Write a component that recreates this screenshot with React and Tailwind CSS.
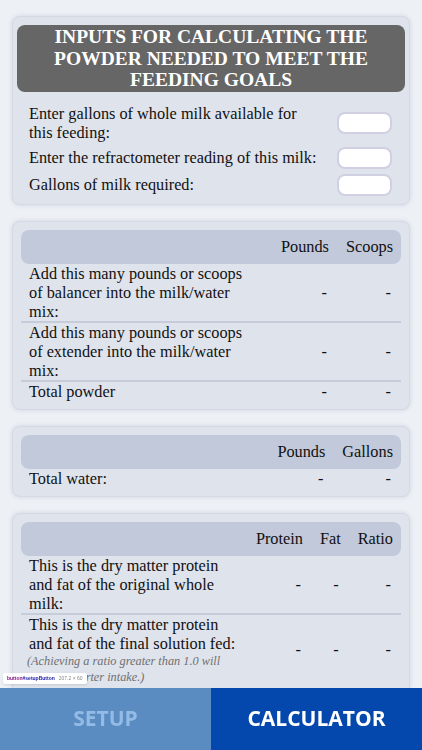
import React from "react";

const serif = { fontFamily: '"Liberation Serif", "Times New Roman", serif' };

const Card = ({ children, className = "" }) => (
  <div
    className={`mx-3 rounded-lg border border-[#d5d9e3] bg-[#dfe3ec] shadow-[0_0_4px_rgba(150,160,190,0.35)] ${className}`}
  >
    {children}
  </div>
);

const ResultTable = ({ columns, rows }) => (
  <table className="w-full border-collapse text-[16.3px] leading-[19px] text-[#111]">
    <thead>
      <tr className="h-[34px]">
        <th className="w-full rounded-l-lg bg-[#c1c9da]"></th>
        {columns.map((col, i) => (
          <th
            key={col}
            className={`bg-[#c1c9da] pl-[17px] text-right font-normal whitespace-nowrap ${
              i === columns.length - 1 ? "rounded-r-lg pr-2" : "pr-0"
            }`}
          >
            {col}
          </th>
        ))}
      </tr>
    </thead>
    <tbody>
      {rows.map((row, r) => (
        <tr key={r} className={r > 0 ? "border-t-2 border-[#c6ccd9]" : ""}>
          <td className="pl-2 align-middle">
            <div className="max-w-[216px]">{row.label}</div>
            {row.note && (
              <div className="-ml-0.5 text-[12.3px] leading-[16px] italic text-[#707070]">
                {row.note}
              </div>
            )}
          </td>
          {columns.map((col, i) => (
            <td
              key={col}
              className={`text-right align-middle ${
                i === columns.length - 1 ? "pr-2.5" : "pr-0.5"
              }`}
            >
              -
            </td>
          ))}
        </tr>
      ))}
    </tbody>
  </table>
);

const InputRow = ({ label }) => (
  <div className="flex items-center justify-between">
    <p className="w-[290px]">{label}</p>
    <div className="h-[22px] w-[55px] rounded-lg border-2 border-[#d0d0e2] bg-white"></div>
  </div>
);

export default function App() {
  return (
    <div className="relative min-h-screen bg-[#edf0f5] pt-4 pb-[70px]" style={serif}>
      {/* Inputs */}
      <Card className="px-[4px] pt-2 pb-2">
        <div className="rounded-lg bg-[#666666] px-4 py-px text-center text-[19.5px] leading-[21.5px] font-bold text-white uppercase">
          Inputs for calculating the powder needed to meet the feeding goals
        </div>
        <div className="mt-[12px] flex flex-col gap-[5px] pr-[13px] pl-[12px] text-[16.3px] leading-[19px] text-[#111]">
          <InputRow label="Enter gallons of whole milk available for this feeding:" />
          <InputRow label="Enter the refractometer reading of this milk:" />
          <InputRow label="Gallons of milk required:" />
        </div>
      </Card>

      {/* Powder */}
      <Card className="mt-4 px-2 pt-2 pb-2">
        <ResultTable
          columns={["Pounds", "Scoops"]}
          rows={[
            { label: "Add this many pounds or scoops of balancer into the milk/water mix:" },
            { label: "Add this many pounds or scoops of extender into the milk/water mix:" },
            { label: "Total powder" },
          ]}
        />
      </Card>

      {/* Water */}
      <Card className="mt-4 px-2 pt-2 pb-2">
        <ResultTable columns={["Pounds", "Gallons"]} rows={[{ label: "Total water:" }]} />
      </Card>

      {/* Protein / fat */}
      <Card className="mt-4 px-2 pt-2 pb-2">
        <ResultTable
          columns={["Protein", "Fat", "Ratio"]}
          rows={[
            { label: "This is the dry matter protein and fat of the original whole milk:" },
            {
              label: "This is the dry matter protein and fat of the final solution fed:",
              note: "(Achieving a ratio greater than 1.0 will increase starter intake.)",
            },
          ]}
        />
      </Card>

      {/* Bottom tabs */}
      <div
        className="fixed right-0 bottom-0 left-0 flex h-[62px] text-[21px] font-bold"
        style={{ fontFamily: '"Open Sans", "Noto Sans", sans-serif' }}
      >
        <button className="relative flex flex-1 items-center justify-center bg-[#5a8bc1] text-[#93bbe6]">
          SETUP
          <div
            className="absolute -top-[15px] left-[3px] flex items-center gap-1 rounded-[2px] bg-white px-1 py-[3px] text-[5px] leading-none font-bold shadow"
            style={{ fontFamily: '"Liberation Sans", sans-serif' }}
          >
            <span className="text-[#881280]">button</span>
            <span className="-ml-1 text-[#1a1aa6]">#setupButton</span>
            <span className="font-normal text-[#888]">207.2 × 60</span>
          </div>
        </button>
        <button className="flex flex-1 items-center justify-center bg-[#0548ad] text-white">
          CALCULATOR
        </button>
      </div>
    </div>
  );
}
